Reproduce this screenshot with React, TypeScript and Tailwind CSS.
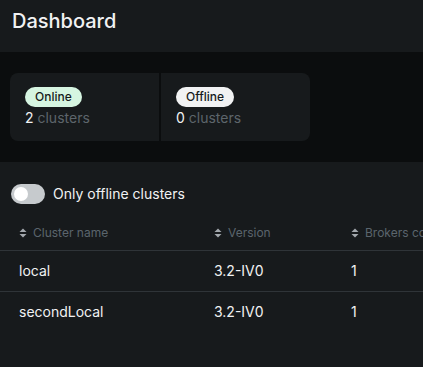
import React, { useState } from 'react';

type Cluster = { name: string; version: string; brokers: number; partitions: number };

const clusters: Cluster[] = [
    { name: 'local', version: '3.2-IV0', brokers: 1, partitions: 28 },
    { name: 'secondLocal', version: '3.2-IV0', brokers: 1, partitions: 28 },
];

const SortIcon = () => (
    <svg width="8" height="10" viewBox="0 0 8 10" className="shrink-0">
        <path d="M4 0.5 L7.5 4 L0.5 4 Z" fill="#a3a8ad" />
        <path d="M4 9.5 L7.5 6 L0.5 6 Z" fill="#a3a8ad" />
    </svg>
);

const StatCard = ({ label, count, badge, last }: { label: string; count: number; badge: string; last?: boolean }) => (
    <div className={`w-[149px] h-[68px] bg-[#171a1c] pl-[15px] pt-[14px] ${last ? 'rounded-r-lg' : 'rounded-l-lg'}`}>
        <div className={`flex w-fit items-center h-[20px] px-[10px] rounded-full text-[12px] font-medium leading-[20px] text-[#171a1c] ${badge}`}>{label}</div>
        <p className="text-[14px] leading-[20px] mt-[1px]">
            <span className="text-[#f1f2f3]">{count}</span> <span className="text-[#5d656b]">clusters</span>
        </p>
    </div>
);

export default function App() {
    const [onlyOffline, setOnlyOffline] = useState(false);
    const rows = onlyOffline ? [] : clusters;

    return (
        <div className="w-[423px] h-[367px] overflow-hidden bg-[#171a1c] text-[#f1f2f3] font-['Inter','Liberation_Sans',sans-serif]">
            <div className="h-[52px] px-[12px] flex items-center">
                <h1 className="text-[20px] font-medium leading-[28px] -mt-[10px]">Dashboard</h1>
            </div>

            <div className="h-[110px] bg-[#0b0d0e] px-[10px] pt-[21px]">
                <div className="flex gap-[2px]">
                    <StatCard label="Online" count={2} badge="bg-[#d6f5e1]" />
                    <StatCard label="Offline" count={0} badge="bg-[#f1f2f3]" last />
                </div>
            </div>

            <div className="pt-[21px]">
                <label className="flex items-center gap-[8px] pl-[11px] cursor-pointer">
                    <button
                        onClick={() => setOnlyOffline(!onlyOffline)}
                        className={`w-[34px] h-[20px] rounded-full flex items-center px-[3px] ${onlyOffline ? 'bg-[#4c5fe6] justify-end' : 'bg-[#c6cacd]'}`}
                    >
                        <span className="w-[14px] h-[14px] rounded-full bg-white" />
                    </button>
                    <span className="text-[14px]">Only offline clusters</span>
                </label>

                <table className="mt-[12px] w-[560px] table-fixed border-collapse text-left">
                    <thead>
                        <tr className="h-[34px] border-b border-[#2f3438]">
                            <th className="w-[214px] pl-[19px] font-normal">
                                <span className="flex items-center gap-[6px] text-[12px] text-[#5b656d]"><SortIcon />Cluster name</span>
                            </th>
                            <th className="w-[137px] font-normal">
                                <span className="flex items-center gap-[6px] text-[12px] text-[#5b656d]"><SortIcon />Version</span>
                            </th>
                            <th className="font-normal">
                                <span className="flex items-center gap-[6px] text-[12px] text-[#5b656d] whitespace-nowrap"><SortIcon />Brokers count</span>
                            </th>
                        </tr>
                    </thead>
                    <tbody>
                        {rows.map((c, i) => (
                            <tr key={c.name} className={`h-[41px] text-[14px] ${i < rows.length - 1 ? 'border-b border-[#2f3438]' : ''}`}>
                                <td className="pl-[19px]">{c.name}</td>
                                <td>{c.version}</td>
                                <td>{c.brokers}</td>
                            </tr>
                        ))}
                    </tbody>
                </table>
            </div>
        </div>
    );
}
